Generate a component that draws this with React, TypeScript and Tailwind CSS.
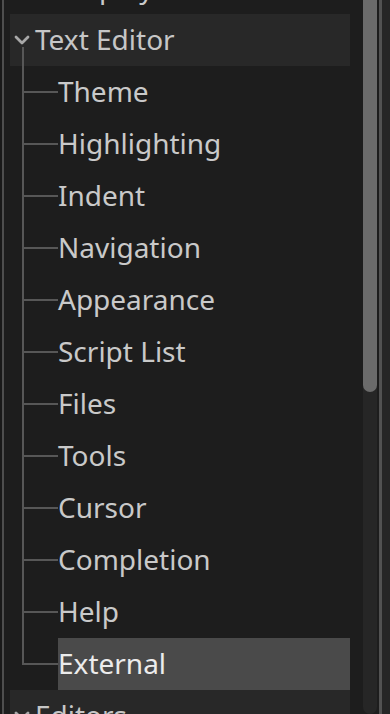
const children = [
  'Theme',
  'Highlighting',
  'Indent',
  'Navigation',
  'Appearance',
  'Script List',
  'Files',
  'Tools',
  'Cursor',
  'Completion',
  'Help',
  'External',
];

const font = { fontFamily: '"Noto Sans", "Open Sans", sans-serif' };

function Chevron() {
  return (
    <svg width="16" height="12" viewBox="0 0 16 12" className="shrink-0">
      <polyline points="2,3 8,9 14,3" fill="none" stroke="#a8a8a8" strokeWidth="2.8" strokeLinecap="round" strokeLinejoin="round" />
    </svg>
  );
}

function CategoryRow({ label, line }: { label: string; line?: boolean }) {
  return (
    <div className="relative h-[52px] flex items-center bg-[#282828] pl-[4px] shrink-0">
      <Chevron />
      <span className="ml-[5px] mt-[-3px] text-[28px] leading-none text-[#c6c6c6]">{label}</span>
      {line && <div className="absolute left-[12px] top-[33px] bottom-0 w-[2px] bg-[#575757]" />}
    </div>
  );
}

function ChildRow({ label, last, selected }: { label: string; last?: boolean; selected?: boolean }) {
  return (
    <div className="h-[52px] flex shrink-0">
      <div className="w-[48px] pl-[12px] flex flex-col shrink-0">
        <div className="flex-1 border-l-2 border-b-2 border-[#575757]" />
        <div className={'flex-1 ' + (last ? '' : 'border-l-2 border-[#575757]')} />
      </div>
      <div className={'flex-1 flex items-center ' + (selected ? 'bg-[#4a4a4a]' : '')}>
        <span className={'mt-[-3px] text-[28px] leading-none ' + (selected ? 'text-[#ececec]' : 'text-[#c9c9c9]')}>{label}</span>
      </div>
    </div>
  );
}

export default function App() {
  return (
    <div className="w-[390px] h-[714px] overflow-hidden flex bg-[#1d1d1d]" style={font}>
      <div className="w-[2px] shrink-0 bg-[#191919]" />
      <div className="w-[2px] shrink-0 bg-[#4e4e4e]" />
      <div className="w-[6px] shrink-0" />
      <div className="w-[340px] shrink-0 flex flex-col">
        <div className="h-[52px] mt-[-38px] flex items-center pl-[48px] shrink-0">
          <span className="mt-[-3px] text-[28px] leading-none text-[#c9c9c9]">Display</span>
        </div>
        <CategoryRow label="Text Editor" line />
        {children.map((c, i) => (
          <ChildRow key={c} label={c} last={i === children.length - 1} selected={c === 'External'} />
        ))}
        <CategoryRow label="Editors" />
      </div>
      <div className="w-[13px] shrink-0" />
      <div className="w-[14px] shrink-0 flex flex-col bg-[#262626] rounded-b-full">
        <div className="h-[412px] mt-[-20px] rounded-full bg-[#6b6b6b] shrink-0" />
      </div>
      <div className="w-[2px] shrink-0" />
      <div className="w-[3px] shrink-0 bg-[#525252]" />
      <div className="w-[8px] shrink-0 bg-[#262626]" />
    </div>
  );
}
